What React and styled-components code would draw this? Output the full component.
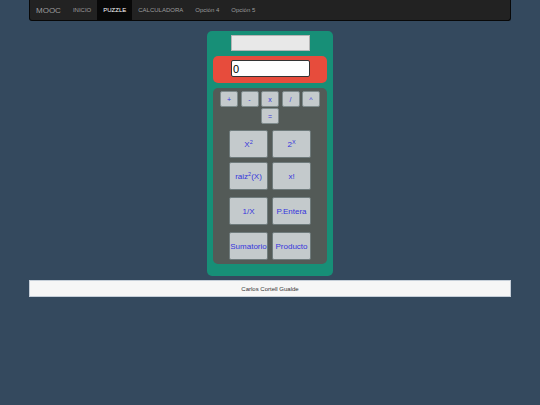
import React from 'react';
import styled, { createGlobalStyle } from 'styled-components';

const GlobalStyle = createGlobalStyle`
  body {
    margin: 0;
    background-color: #34495e;
    font-family: "Liberation Sans", Arial, sans-serif;
  }
`;

const Page = styled.div`
  display: flex;
  flex-direction: column;
  align-items: center;
  padding: 0 29px;
`;

const NavBar = styled.nav`
  align-self: stretch;
  height: 21px;
  background-color: #222;
  border: 1px solid #080808;
  border-top: none;
  border-radius: 0 0 3px 3px;
  display: flex;
  align-items: stretch;
  box-sizing: border-box;
`;

const Brand = styled.span`
  display: flex;
  align-items: center;
  padding: 0 6px 0 6px;
  font-size: 8px;
  color: #9d9d9d;
`;

const NavLink = styled.a`
  display: flex;
  align-items: center;
  padding: 0 6px;
  font-size: 6px;
  color: ${({ $active }) => ($active ? '#fff' : '#9d9d9d')};
  background-color: ${({ $active }) => ($active ? '#080808' : 'transparent')};
  text-decoration: none;
`;

const Calculator = styled.div`
  margin-top: 10px;
  width: 126px;
  background-color: #178f77;
  border-radius: 5px;
  padding: 4px 6px 12px;
  box-sizing: border-box;
  display: flex;
  flex-direction: column;
  align-items: center;
`;

const Display = styled.div`
  width: 79px;
  height: 16px;
  background-color: #e8e8e8;
  border: 1px solid #b5b5b5;
  box-sizing: border-box;
  margin-left: 1px;
`;

const RedPanel = styled.div`
  align-self: stretch;
  margin-top: 5px;
  height: 27px;
  background-color: #e74c3c;
  border-radius: 5px;
  display: flex;
  justify-content: center;
  padding-top: 4px;
  box-sizing: border-box;
`;

const NumberInput = styled.input`
  width: 79px;
  height: 17px;
  box-sizing: border-box;
  margin: 0 0 0 1px;
  padding: 0 1px;
  border: 1px solid #333;
  border-radius: 2px;
  font-family: "Liberation Sans", Arial, sans-serif;
  font-size: 11px;
  color: #000;
  background: #fff;
  outline: none;
`;

const KeyPanel = styled.div`
  align-self: stretch;
  margin-top: 5px;
  background-color: #535a57;
  border-radius: 5px;
  padding: 3px 4px 4px;
  display: flex;
  flex-direction: column;
  align-items: center;
`;

const OpRow = styled.div`
  display: flex;
  flex-wrap: wrap;
  justify-content: center;
  column-gap: 2.5px;
  row-gap: 1px;
  width: 100%;
`;

const OpKey = styled.button`
  width: 18px;
  height: 16px;
  padding: 0;
  background-color: #c4cacc;
  border: 1px solid #7f8c8d;
  border-radius: 2px;
  color: #3535dc;
  font-family: "Liberation Sans", Arial, sans-serif;
  font-size: 7px;
  box-sizing: border-box;
`;

const KeyRow = styled.div`
  display: flex;
  gap: 4px;
  margin-top: ${({ $top }) => $top}px;
`;

const BigKey = styled.button`
  width: 39px;
  height: 28px;
  padding: 0;
  background-color: #c4cacc;
  border: 1px solid #6f7b7c;
  border-radius: 2px;
  color: #3535dc;
  font-family: "Liberation Sans", Arial, sans-serif;
  font-size: 8px;
  box-sizing: border-box;
  sup {
    font-size: 5.5px;
    vertical-align: 3px;
    line-height: 0;
  }
`;

const Footer = styled.footer`
  align-self: stretch;
  margin-top: 4px;
  height: 17px;
  background-color: #f6f6f6;
  border: 1px solid #c5ced8;
  box-sizing: border-box;
  display: flex;
  align-items: center;
  justify-content: center;
  font-size: 6px;
  color: #333;
`;

const links = ['INICIO', 'PUZZLE', 'CALCULADORA', 'Opción 4', 'Opción 5'];
const ops = ['+', '-', 'x', '/', '^', '='];

export default function App() {
  return (
    <>
      <GlobalStyle />
      <Page>
        <NavBar>
          <Brand>MOOC</Brand>
          {links.map((l) => (
            <NavLink key={l} href="#" $active={l === 'PUZZLE'}>
              {l}
            </NavLink>
          ))}
        </NavBar>
        <Calculator>
          <Display />
          <RedPanel>
            <NumberInput defaultValue="0" autoFocus />
          </RedPanel>
          <KeyPanel>
            <OpRow>
              {ops.map((o) => (
                <OpKey key={o}>{o}</OpKey>
              ))}
            </OpRow>
            <KeyRow $top={6}>
              <BigKey>X<sup>2</sup></BigKey>
              <BigKey>2<sup>X</sup></BigKey>
            </KeyRow>
            <KeyRow $top={4}>
              <BigKey>raiz<sup>2</sup>(X)</BigKey>
              <BigKey>x!</BigKey>
            </KeyRow>
            <KeyRow $top={7}>
              <BigKey>1/X</BigKey>
              <BigKey>P.Entera</BigKey>
            </KeyRow>
            <KeyRow $top={7}>
              <BigKey>Sumatorio</BigKey>
              <BigKey>Producto</BigKey>
            </KeyRow>
          </KeyPanel>
        </Calculator>
        <Footer>Carlos Cortell Gualde</Footer>
      </Page>
    </>
  );
}
